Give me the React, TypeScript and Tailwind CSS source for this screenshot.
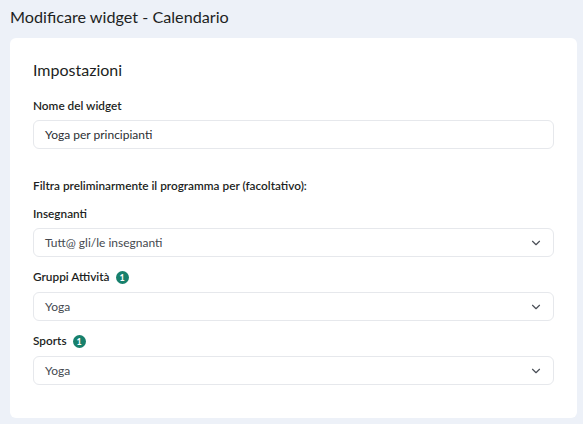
import { ChevronDown } from 'lucide-react'

const Badge = ({ n }: { n: number }) => (
  <span className="ml-[6px] inline-flex h-[13px] w-[13px] items-center justify-center rounded-full bg-[#17806c] text-[9px] font-bold leading-none text-white">
    {n}
  </span>
)

const Select = ({ value }: { value: string }) => (
  <div className="flex h-[29px] items-center justify-between rounded-[6px] border border-[#e6e8ec] bg-white pl-[11px] pr-[10px] text-[12px] text-[#45494f]">
    <span>{value}</span>
    <ChevronDown className="h-[14px] w-[14px] text-[#4b5058]" strokeWidth={2} />
  </div>
)

export default function App() {
  return (
    <main className="min-h-[424px] bg-[#edf1f8] pb-[7px] font-['Lato',sans-serif] text-[#1d1f23]">
      <div className="flex h-[38px] items-center px-[10px] pb-[4px] text-[16.2px]">
        Modificare widget - Calendario
      </div>

      <div className="ml-[10px] mr-[6px] rounded-[6px] bg-white px-[23px] pt-[20px] pb-[33px]">
        <h2 className="h-[24px] text-[16px] leading-[24px]">Impostazioni</h2>

        <div className="mt-[15px] h-[18px] text-[11.8px] font-semibold leading-[18px]">Nome del widget</div>
        <div className="mt-[5px] flex h-[29px] items-center rounded-[6px] border border-[#e6e8ec] px-[11px] text-[12px] text-[#2b2e33]">
          Yoga per principianti
        </div>

        <div className="mt-[28px] h-[18px] text-[11.8px] font-semibold leading-[18px]">
          Filtra preliminarmente il programma per (facoltativo):
        </div>

        <div className="mt-[10px] h-[18px] text-[11.8px] font-semibold leading-[18px]">Insegnanti</div>
        <div className="mt-[5px]">
          <Select value="Tutt@ gli/le insegnanti" />
        </div>

        <div className="mt-[11px] flex h-[18px] items-center text-[11.8px] font-semibold leading-[18px]">
          Gruppi Attività
          <Badge n={1} />
        </div>
        <div className="mt-[6px]">
          <Select value="Yoga" />
        </div>

        <div className="mt-[11px] flex h-[18px] items-center text-[11.8px] font-semibold leading-[18px]">
          Sports
          <Badge n={1} />
        </div>
        <div className="mt-[6px]">
          <Select value="Yoga" />
        </div>
      </div>
    </main>
  )
}
